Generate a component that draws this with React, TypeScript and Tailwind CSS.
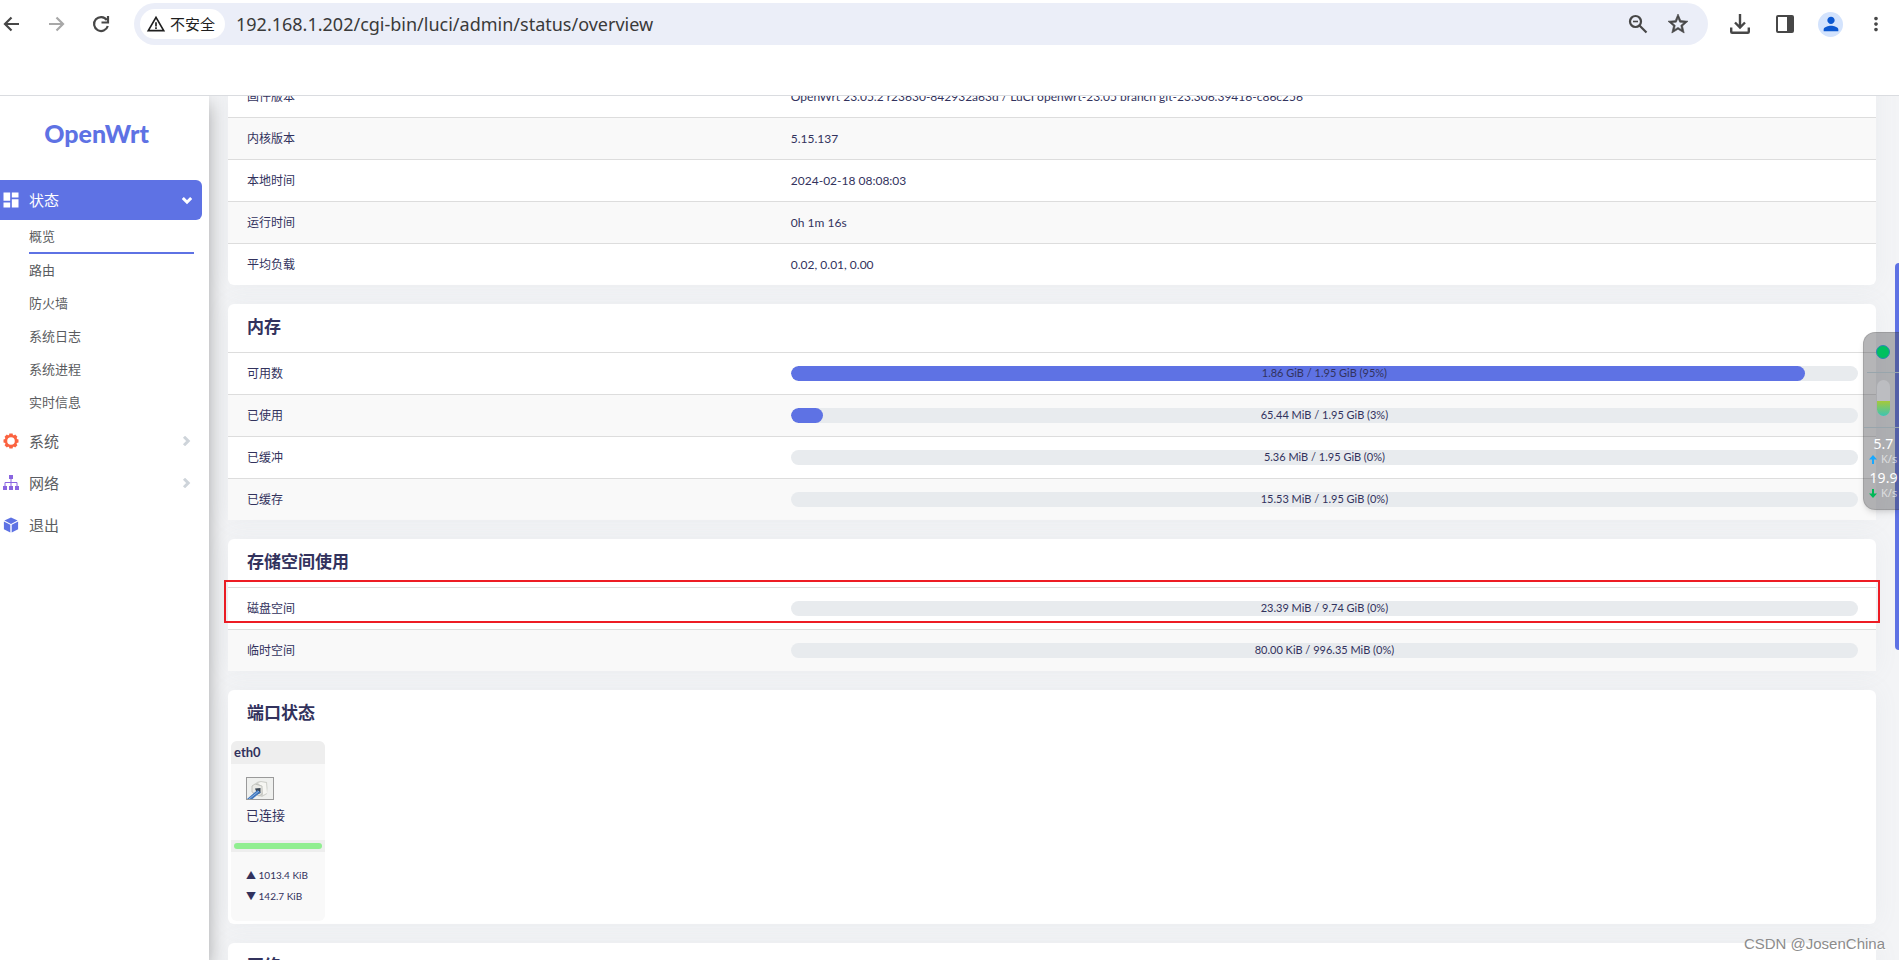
import type { ReactNode } from "react";
import { MdDashboard, MdMoreVert, MdPerson, MdStarOutline, MdWarningAmber } from "react-icons/md";

const statusLinks = ["概览", "路由", "防火墙", "系统日志", "系统进程", "实时信息"];

const systemRows: [string, string][] = [
  ["固件版本", "OpenWrt 23.05.2 r23630-842932a63d / LuCI openwrt-23.05 branch git-23.306.39416-c86c256"],
  ["内核版本", "5.15.137"],
  ["本地时间", "2024-02-18 08:08:03"],
  ["运行时间", "0h 1m 16s"],
  ["平均负载", "0.02, 0.01, 0.00"],
];

const memoryRows: [string, string, number][] = [
  ["可用数", "1.86 GiB / 1.95 GiB (95%)", 95],
  ["已使用", "65.44 MiB / 1.95 GiB (3%)", 3],
  ["已缓冲", "5.36 MiB / 1.95 GiB (0%)", 0],
  ["已缓存", "15.53 MiB / 1.95 GiB (0%)", 0],
];

const storageRows: [string, string, number][] = [
  ["磁盘空间", "23.39 MiB / 9.74 GiB (0%)", 0],
  ["临时空间", "80.00 KiB / 996.35 MiB (0%)", 0],
];

function GearIcon() {
  const teeth = [0, 45, 90, 135, 180, 225, 270, 315];
  return (
    <svg viewBox="0 0 16 16" className="size-4" aria-hidden="true">
      <circle cx="8" cy="8" r="5" fill="none" stroke="#fb6340" strokeWidth="2.4" />
      {teeth.map((deg) => (
        <path key={deg} d="M6.4 0.5h3.2l0.6 2.6H5.8z" fill="#fb6340" transform={`rotate(${deg} 8 8)`} />
      ))}
    </svg>
  );
}

function SitemapIcon() {
  return (
    <svg viewBox="0 0 16 16" className="size-4" fill="#8965e0" aria-hidden="true">
      <rect x="6" y="0" width="4" height="4" />
      <rect x="0" y="11" width="4" height="4" />
      <rect x="6" y="11" width="4" height="4" />
      <rect x="12" y="11" width="4" height="4" />
      <path d="M2 11V7.5h12V11M8 4v7" fill="none" stroke="#8965e0" strokeWidth="1" />
    </svg>
  );
}

function CubeIcon() {
  return (
    <svg viewBox="0 0 16 16" className="size-4" fill="#5e72e4" aria-hidden="true">
      <path d="M8 0.6l6.6 3L8 6.9 1.4 3.6z" />
      <path d="M0.9 4.6l6.4 3.2v7.6L0.9 12.2z" />
      <path d="M15.1 4.6L8.7 7.8v7.6l6.4-3.2z" />
    </svg>
  );
}

function Chevron({ down }: { down?: boolean }) {
  return (
    <svg
      viewBox="0 0 10 10"
      className={down ? "size-2.5 rotate-90" : "size-2.5"}
      fill="none"
      stroke="currentColor"
      strokeWidth="3"
      aria-hidden="true"
    >
      <path d="M3 0.8L7.2 5 3 9.2" />
    </svg>
  );
}

// Browser toolbar glyphs share one stroke weight
function ToolIcon({ children }: { children: ReactNode }) {
  return (
    <svg viewBox="0 0 22 22" className="size-[22px]" fill="none" stroke="currentColor" strokeWidth="2.2" aria-hidden="true">
      {children}
    </svg>
  );
}

function DownloadIcon() {
  return (
    <svg viewBox="0 0 20 20" className="size-5" fill="none" stroke="#474747" strokeWidth="2.4" aria-hidden="true">
      <path d="M10 0v13M5 8.5l5 5 5-5" />
      <path d="M1.200 13.5V17.800q0 1 1 1h15.600q1 0 1-1v-4.300" />
    </svg>
  );
}

function PanelIcon() {
  return (
    <svg viewBox="0 0 18 18" className="size-[18px]" aria-hidden="true">
      <rect x="1" y="1" width="16" height="16" rx="1" fill="none" stroke="#474747" strokeWidth="2" />
      <path d="M11 1h6v16h-6z" fill="#474747" />
    </svg>
  );
}

// RJ45 plug shown on ports with a link
function PortIcon() {
  return (
    <svg viewBox="0 0 28 23" className="h-[23px] w-7" role="img" aria-label="已连接">
      <rect x="0.5" y="0.5" width="27" height="22" fill="#eff0ee" stroke="#9a9a9a" />
      <path d="M9 7q2-3 6-3l6 1q1 6 0 12l-5 3-8-3z" fill="#cfd0cb" />
      <path d="M12 6l3-1 5 1 1 10-4 2-1-8z" fill="#f6f6f2" />
      <path d="M6 9l3-2 7 2v8l-3 2-7-4z" fill="#e9e9e5" stroke="#b9bab4" strokeWidth="0.8" />
      <path d="M9 11.500l5.500-0.500v5l-3 1.500z" fill="#3a4654" />
      <path d="M1 22L11.500 13l3 2.200L6.500 22z" fill="#3f76bd" />
      <path d="M3 22l10-8" stroke="#8db4e2" strokeWidth="1" />
    </svg>
  );
}

function BrowserBar() {
  return (
    <header className="h-24 shrink-0 border-b border-[#dadce0] bg-white pt-[3px]">
      <div className="flex h-[42px] items-center pr-3 text-[#474747]">
        <div className="flex w-[134px] shrink-0 items-center gap-[23px]">
          <button type="button" aria-label="后退">
            <ToolIcon>
              <path d="M19 11H5M11.500 4.500L5 11l6.500 6.500" />
            </ToolIcon>
          </button>
          <button type="button" aria-label="前进" className="text-[#a8a8a8]">
            <ToolIcon>
              <path d="M4 11h14M11.500 4.500L18 11l-6.500 6.500" />
            </ToolIcon>
          </button>
          <button type="button" aria-label="刷新">
            <ToolIcon>
              <path d="M16.800 7A7 7 0 1 0 17.800 13" />
              <path d="M18 3v6.500h-6.500" />
            </ToolIcon>
          </button>
        </div>
        <div className="flex h-full min-w-0 flex-1 items-center rounded-full bg-[#ebeef8] pr-[18px] pl-1.5">
          <button type="button" className="flex h-[30px] w-[85px] shrink-0 items-center gap-1 rounded-full bg-white pl-1.5 text-[15px] text-[#1f1f1f]">
            <MdWarningAmber className="size-5" />
            不安全
          </button>
          <input
            aria-label="地址"
            className="min-w-0 flex-1 bg-transparent pl-[11px] font-['Noto_Sans'] text-[18px] text-[#3a3a3a] outline-none"
            defaultValue="192.168.1.202/cgi-bin/luci/admin/status/overview"
          />
          <div className="flex shrink-0 items-center gap-[17px]">
            <button type="button" aria-label="缩小">
              <ToolIcon>
                <circle cx="8.5" cy="8.5" r="5.5" />
                <path d="M12.500 12.500l7 7" />
                <path d="M6 8.5h5" strokeWidth="1.6" />
              </ToolIcon>
            </button>
            <button type="button" aria-label="收藏"><MdStarOutline className="size-6" stroke="currentColor" strokeWidth="0.6" /></button>
          </div>
        </div>
        <div className="flex shrink-0 items-center pl-[22px]">
          <button type="button" aria-label="下载" className="mr-[26px]"><DownloadIcon /></button>
          <button type="button" aria-label="侧边栏" className="mr-6"><PanelIcon /></button>
          <button type="button" aria-label="用户" className="mr-[22px] flex size-[25px] items-center justify-center rounded-full bg-[#d3e3fd] text-[#0b57d0]">
            <MdPerson className="size-[22px]" />
          </button>
          <button type="button" aria-label="菜单"><MdMoreVert className="size-[22px]" /></button>
        </div>
      </div>
    </header>
  );
}

function MenuItem({ icon, label, arrow }: { icon: ReactNode; label: string; arrow?: boolean }) {
  return (
    <a href="#" className="flex h-[42px] items-center pr-[18px] pl-[3px] text-[15px] text-[#5a5c60]">
      {icon}
      <span className="flex-1 pl-2.5">{label}</span>
      {arrow && (
        <span className="text-[#ced4da]">
          <Chevron />
        </span>
      )}
    </a>
  );
}

function Sidebar() {
  return (
    <aside className="z-10 w-[209px] shrink-0 bg-white shadow-[0_8px_18px_rgba(0,0,0,0.32)]">
      <a href="#" className="flex h-[84px] items-center justify-center pr-4 pb-2 font-['Lato'] text-[25px] font-black text-[#5e72e4]">
        OpenWrt
      </a>
      <nav>
        <button type="button" className="flex h-10 w-[202px] items-center rounded-r-md bg-[#5e72e4] pr-2.5 pl-[3px] text-left text-[15px] text-white">
          <MdDashboard className="size-4 scale-125" />
          <span className="flex-1 pl-2.5">状态</span>
          <Chevron down />
        </button>
        <ul className="mr-[15px] ml-[29px] py-px">
          {statusLinks.map((label, i) => (
            <li key={label}>
              <a
                href="#"
                className={
                  i === 0
                    ? "flex h-[33px] items-center border-b-2 border-[#5e72e4] text-[13px] text-[#5a5c60]"
                    : "flex h-[33px] items-center text-[13px] text-[#5a5c60]"
                }
              >
                {label}
              </a>
            </li>
          ))}
        </ul>
        <MenuItem icon={<GearIcon />} label="系统" arrow />
        <MenuItem icon={<SitemapIcon />} label="网络" arrow />
        <MenuItem icon={<CubeIcon />} label="退出" />
      </nav>
    </aside>
  );
}

function Card({ title, children }: { title?: string; children?: ReactNode }) {
  return (
    <section className="relative shrink-0 rounded-md bg-white shadow-[0_0_24px_rgba(136,152,170,0.08)]">
      {title && <h3 className="flex h-12 items-center px-[19px] pb-0.5 text-[17px] font-bold">{title}</h3>}
      {children}
    </section>
  );
}

function InfoTable({ rows }: { rows: [string, ReactNode][] }) {
  return (
    <table className="w-full table-fixed border-separate border-spacing-0 text-xs">
      <tbody>
        {rows.map(([label, value]) => (
          <tr key={label} className="h-[42px] even:bg-[#f9f9f9]">
            <th scope="row" className="w-[33%] border-t border-[#ddd] px-[19px] text-left font-normal">{label}</th>
            <td className="border-t border-[#ddd] pr-[18px] pl-[19px]">{value}</td>
          </tr>
        ))}
      </tbody>
    </table>
  );
}

function UsageBar({ text, percent }: { text: string; percent: number }) {
  return (
    <div className="grid h-[15px] overflow-hidden rounded-full bg-[#e8ebee]" role="progressbar" aria-label={text} aria-valuenow={percent}>
      <div className="col-start-1 row-start-1 h-[15px] rounded-full bg-[#5e72e4]" style={{ width: `${percent}%` }} />
      <span className="col-start-1 row-start-1 text-center text-[11px] leading-[14px]">{text}</span>
    </div>
  );
}

function UsageTable({ rows }: { rows: [string, string, number][] }) {
  return <InfoTable rows={rows.map(([label, text, percent]) => [label, <UsageBar text={text} percent={percent} />])} />;
}

function PortStatus() {
  return (
    <div className="p-[3px]">
      <div className="w-[94px] overflow-hidden rounded-md bg-[#f9f9f9]">
        <div className="h-[23px] bg-[#eee] px-[3px] text-[13px] leading-[22px] font-bold">eth0</div>
        <div className="flex h-[76px] flex-col gap-[5px] px-[15px] pt-[13px] text-[13px] leading-5">
          <PortIcon />
          <span>已连接</span>
        </div>
        <div className="bg-[#eee] p-[3px]">
          <div className="h-1.5 rounded-full bg-[#90ee90]" />
        </div>
        <div className="h-[69px] px-[15px] pt-[13px] text-[10px] leading-[21px]">
          <div className="whitespace-nowrap">▲ 1013.4 KiB</div>
          <div className="whitespace-nowrap">▼ 142.7 KiB</div>
        </div>
      </div>
    </div>
  );
}

function Speed({ value, color, up }: { value: string; color: string; up?: boolean }) {
  return (
    <div className="h-[34px] whitespace-nowrap">
      <div className="pl-1 text-center text-sm leading-[18px]">{value}</div>
      <div className="flex items-center gap-1 pl-[5px] text-[11px] leading-3 text-white/60">
        <svg viewBox="0 0 8 9" className="h-[9px] w-2 shrink-0" aria-hidden="true">
          <path d="M4 0l4 4.500H5V9H3V4.500H0z" fill={color} transform={up ? undefined : "rotate(180 4 4.5)"} />
        </svg>
        K/s
      </div>
    </div>
  );
}

// Floating desktop speed meter, docked at the screen edge
function SpeedMeter() {
  return (
    <div className="absolute top-[332px] right-0 z-20 h-[178px] w-9 overflow-hidden rounded-l-xl border border-r-0 border-black/10 bg-[#46464a]/40 font-['Noto_Sans'] text-white shadow-md">
      <svg viewBox="0 0 36 94" className="block h-[94px] w-9" aria-hidden="true">
        <defs>
          <linearGradient id="level" x1="0" y1="0" x2="0" y2="1">
            <stop offset="0" stopColor="#a5c93a" />
            <stop offset="1" stopColor="#3cc4b4" />
          </linearGradient>
        </defs>
        <circle cx="19" cy="19" r="6.5" fill="#00c060" stroke="#2f86b5" />
        <path d="M3 39.5h33" stroke="#98a5ac" />
        <rect x="13" y="47" width="13" height="36" rx="6.5" fill="#bcbdc1" />
        <path d="M13 68h13v8.500a6.500 6.500 0 0 1-13 0z" fill="url(#level)" />
      </svg>
      <div className="border-t border-[#98a5ac] pt-[7px]">
        <Speed value="5.7" color="#18a8ff" up />
        <Speed value="19.9" color="#00b857" />
      </div>
    </div>
  );
}

export default function App() {
  return (
    <div className="relative flex h-screen flex-col overflow-hidden bg-[#f3f4f6] font-['Lato','Noto_Sans_CJK_SC',sans-serif] text-[#32325d]">
      <BrowserBar />
      <div className="flex min-h-0 flex-1 overflow-hidden">
        <Sidebar />
        <main className="flex min-w-0 flex-1 flex-col gap-[19px] overflow-hidden pr-[23px] pl-[19px]">
          {/* scrolled: the first row sits partly under the browser bar */}
          <div className="-mt-[21px] shrink-0">
            <Card>
              <InfoTable rows={systemRows} />
            </Card>
          </div>
          <Card title="内存">
            <UsageTable rows={memoryRows} />
          </Card>
          <Card title="存储空间使用">
            <UsageTable rows={storageRows} />
            <div className="pointer-events-none absolute -inset-x-1 top-[41px] h-[43px] border-2 border-[#ed1c24]" />
          </Card>
          <Card title="端口状态">
            <PortStatus />
          </Card>
          <Card title="网络" />
        </main>
      </div>
      <div className="absolute top-[263px] right-0 h-[387px] w-1 rounded-l-md bg-[#5e72e4]" />
      <SpeedMeter />
      <div className="absolute right-3.5 bottom-1 font-['Liberation_Sans'] text-[15px] leading-6 text-[#8c8c8c] [text-shadow:1px_1px_0_#fff]">
        CSDN @JosenChina
      </div>
    </div>
  );
}
